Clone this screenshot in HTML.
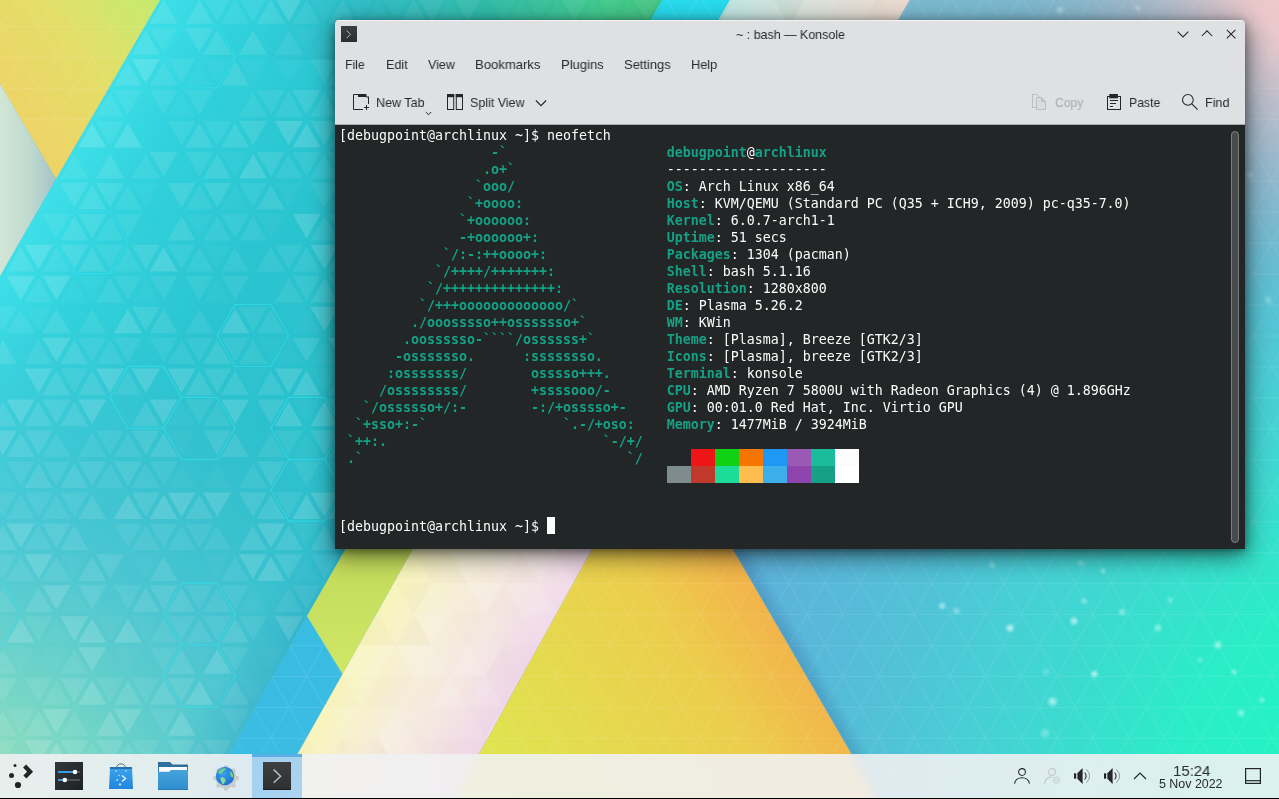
<!DOCTYPE html>
<html lang="en"><head><meta charset="utf-8"><title>~ : bash — Konsole</title>
<style>
html,body{margin:0;padding:0;}
body{width:1279px;height:799px;overflow:hidden;position:relative;background:#3cc;font-family:"Liberation Sans",sans-serif;font-size:13.33px;color:#232629;}
.wall{position:absolute;left:0;top:0;}
.abs{position:absolute;}
.win{position:absolute;left:335px;top:20px;width:910px;height:529px;background:#dee0e2;border-radius:4px 4px 0 0;box-shadow:0 6px 24px 1px rgba(0,0,0,0.55),0 2px 9px 0 rgba(0,0,0,0.35);overflow:hidden;}
.win .hl{position:absolute;left:0;top:0;width:100%;height:1px;background:rgba(255,255,255,0.65);}
.term{position:absolute;left:0;top:105px;width:910px;height:424px;background:#232627;box-shadow:0 -1px 0 #a9abad;}
.term pre{position:absolute;left:4px;top:2px;will-change:transform;margin:0;font-family:"DejaVu Sans Mono","Liberation Mono",monospace;font-size:13.29px;line-height:17px;color:#fcfcfc;white-space:pre;}
.term pre b.c{color:#16a085;font-weight:bold;}
.term i{position:absolute;width:24px;height:17px;display:block;}
.cursor{position:absolute;left:212px;top:392px;width:8px;height:17px;background:#fcfcfc;}
.sb{position:absolute;left:896px;top:6px;width:6px;height:410px;border:1px solid #7b7e7f;border-radius:4px;background:#484b4c;}
.lbl{position:absolute;white-space:pre;font-size:13.33px;line-height:16px;height:16px;transform-origin:0 0;color:#272b2f;will-change:transform;}
.dis{color:#a9acae;}
.panel{position:absolute;left:0;top:754px;width:1279px;height:44px;background:rgba(240,241,242,0.895);-webkit-backdrop-filter:blur(5px);backdrop-filter:blur(5px);}
.blackline{position:absolute;left:0;top:798px;width:1279px;height:1px;background:#000;}
.task{position:absolute;left:252px;top:754px;width:50px;height:44px;background:rgba(150,204,240,0.8);}
.task::before{content:"";position:absolute;left:0;top:0;width:100%;height:3px;background:#5aaee6;}
svg{display:block;overflow:visible;}
.clock{position:absolute;white-space:pre;color:#272b2f;transform-origin:0 0;will-change:transform;}

</style></head>
<body>

<svg class="wall" width="1279" height="799" viewBox="0 0 1279 799">
<defs>
  <radialGradient id="gMint" gradientUnits="userSpaceOnUse" cx="1380" cy="800" r="700">
    <stop offset="0" stop-color="#1cf8c2" stop-opacity="1"/><stop offset="0.3" stop-color="#28f0c6" stop-opacity="0.95"/><stop offset="0.6" stop-color="#40d8d4" stop-opacity="0.75"/><stop offset="1" stop-color="#54bcd8" stop-opacity="0"/>
  </radialGradient>
  <radialGradient id="gPink" gradientUnits="userSpaceOnUse" cx="1350" cy="-50" r="370">
    <stop offset="0" stop-color="#f8cccc" stop-opacity="1"/><stop offset="0.3" stop-color="#f0c8ca" stop-opacity="0.95"/><stop offset="0.6" stop-color="#b8b8c8" stop-opacity="0.6"/><stop offset="1" stop-color="#80b0c8" stop-opacity="0"/>
  </radialGradient>
  <linearGradient id="gSteel" gradientUnits="userSpaceOnUse" x1="0" y1="0" x2="0" y2="480">
    <stop offset="0" stop-color="#7cbad0" stop-opacity="1"/><stop offset="0.5" stop-color="#78b8ce" stop-opacity="0.8"/><stop offset="1" stop-color="#6ab8d8" stop-opacity="0"/>
  </linearGradient>
  <radialGradient id="gDot"><stop offset="0" stop-color="#fff" stop-opacity="1"/><stop offset="0.35" stop-color="#eaffff" stop-opacity="0.7"/><stop offset="1" stop-color="#dff" stop-opacity="0"/></radialGradient>
  <linearGradient id="gTeal" gradientUnits="userSpaceOnUse" x1="160" y1="0" x2="419.8" y2="150">
    <stop offset="0" stop-color="#3ddfe8"/><stop offset="0.25" stop-color="#31d2dd"/><stop offset="0.65" stop-color="#2ac5d1"/><stop offset="1" stop-color="#29c1cd"/>
  </linearGradient>
  <radialGradient id="gTealBL" gradientUnits="userSpaceOnUse" cx="-30" cy="820" r="520">
    <stop offset="0" stop-color="#a8e2b4" stop-opacity="1"/><stop offset="0.25" stop-color="#84dac4" stop-opacity="0.85"/><stop offset="0.55" stop-color="#60c8d4" stop-opacity="0.6"/><stop offset="1" stop-color="#50b8d0" stop-opacity="0"/>
  </radialGradient>
  <linearGradient id="gTealTop" gradientUnits="userSpaceOnUse" x1="260" y1="0" x2="660" y2="0">
    <stop offset="0" stop-color="#2cb6c6" stop-opacity="0"/><stop offset="0.25" stop-color="#2eb8c0" stop-opacity="0.7"/><stop offset="0.6" stop-color="#32bea4" stop-opacity="0.95"/><stop offset="1" stop-color="#48d27e" stop-opacity="1"/>
  </linearGradient>
  <linearGradient id="gYel" gradientUnits="userSpaceOnUse" x1="0" y1="120" x2="150" y2="0">
    <stop offset="0" stop-color="#efd266"/><stop offset="0.55" stop-color="#e4de68"/><stop offset="1" stop-color="#c6ea6e"/>
  </linearGradient>
  <linearGradient id="gPale" gradientUnits="userSpaceOnUse" x1="0" y1="0" x2="58" y2="0">
    <stop offset="0" stop-color="#d2e6d6"/><stop offset="0.5" stop-color="#c0dad0"/><stop offset="1" stop-color="#a2c2c4"/>
  </linearGradient>
  <linearGradient id="gStripe" gradientUnits="userSpaceOnUse" x1="0" y1="0" x2="0" y2="799">
    <stop offset="0" stop-color="#28dcee"/><stop offset="0.7" stop-color="#38bce0"/><stop offset="1" stop-color="#3cbce4"/>
  </linearGradient>
  <linearGradient id="gLime" gradientUnits="userSpaceOnUse" x1="0" y1="548" x2="0" y2="680">
    <stop offset="0" stop-color="#c2da5a"/><stop offset="1" stop-color="#d0e866"/>
  </linearGradient>
  <linearGradient id="gCream" gradientUnits="userSpaceOnUse" x1="413.5" y1="548" x2="548.6" y2="626">
    <stop offset="0" stop-color="#f8f5ba"/><stop offset="0.35" stop-color="#f6efd6"/><stop offset="0.7" stop-color="#f4e6e2"/><stop offset="1" stop-color="#f0d8ea"/>
  </linearGradient>
  <linearGradient id="gCreamTop" gradientUnits="userSpaceOnUse" x1="720" y1="0" x2="910" y2="0">
    <stop offset="0" stop-color="#b4e4e0"/><stop offset="0.5" stop-color="#d8ded6"/><stop offset="1" stop-color="#eedcd0"/>
  </linearGradient>
  <linearGradient id="gOr" gradientUnits="userSpaceOnUse" x1="470" y1="760" x2="760" y2="560">
    <stop offset="0" stop-color="#dee650"/><stop offset="0.68" stop-color="#eccd4c"/><stop offset="1" stop-color="#f4ae4a"/>
  </linearGradient>
  <linearGradient id="shA" gradientUnits="userSpaceOnUse" x1="662" y1="0" x2="623" y2="-22.5">
    <stop offset="0" stop-color="#0850a0" stop-opacity="0.10"/><stop offset="1" stop-color="#0850a0" stop-opacity="0"/>
  </linearGradient>
  <linearGradient id="shB" gradientUnits="userSpaceOnUse" x1="732.5" y1="549" x2="747.2" y2="540.5">
    <stop offset="0" stop-color="#102060" stop-opacity="0.17"/><stop offset="1" stop-color="#102060" stop-opacity="0"/>
  </linearGradient>
  <pattern id="wire" patternUnits="userSpaceOnUse" width="35.74" height="61.9" patternTransform="translate(181.5 26.0)">
    <path d="M0 0.5 H35.74 M0 31.45 H35.74 M0 0 L35.74 61.9 M35.74 0 L0 61.9" fill="none" stroke="#fff" stroke-width="1"/>
  </pattern>
  <clipPath id="cTeal"><polygon points="160.0,0.0 662.0,0.0 307.0,616.0 203.5,799.0 0.0,799.0 0.0,276.0 56.0,179.0"/></clipPath>
  <clipPath id="cCream"><polygon points="730.0,0.0 909.5,0.0 592.6,548.0 454.1,799.0 272.3,799.0 413.5,548.0"/></clipPath>
  <clipPath id="cRight"><polygon points="909.5,0.0 1279.0,0.0 1279.0,799.0 877.4,799.0 661.0,425.5"/></clipPath>
</defs>
<rect width="1279" height="799" fill="#5eb2da"/>
<rect x="880" width="399" height="480" fill="url(#gSteel)"/>
<rect width="1279" height="799" fill="url(#gMint)"/>
<rect width="1279" height="799" fill="url(#gPink)"/>
<g clip-path="url(#cRight)">
  <rect width="1279" height="799" fill="url(#wire)" opacity="0.09"/>
  <circle cx="942" cy="606" r="5.0" fill="url(#gDot)" opacity="0.50"/><circle cx="956.6" cy="611" r="5.0" fill="url(#gDot)" opacity="0.36"/><circle cx="1010" cy="628" r="5.5" fill="url(#gDot)" opacity="0.68"/><circle cx="1074" cy="621" r="5.5" fill="url(#gDot)" opacity="0.63"/><circle cx="1084" cy="601" r="4.6" fill="url(#gDot)" opacity="0.36"/><circle cx="1122" cy="612" r="5.0" fill="url(#gDot)" opacity="0.41"/><circle cx="1094.5" cy="674" r="5.0" fill="url(#gDot)" opacity="0.63"/><circle cx="1052.6" cy="701.6" r="6.3" fill="url(#gDot)" opacity="0.63"/><circle cx="1045" cy="733" r="6.3" fill="url(#gDot)" opacity="0.36"/><circle cx="1046" cy="672" r="5.2" fill="url(#gDot)" opacity="0.23"/><circle cx="992" cy="565" r="5.0" fill="url(#gDot)" opacity="0.27"/><circle cx="1081" cy="563" r="5.0" fill="url(#gDot)" opacity="0.32"/><circle cx="1103" cy="571" r="4.2" fill="url(#gDot)" opacity="0.36"/><circle cx="1218" cy="645" r="5.5" fill="url(#gDot)" opacity="0.54"/><circle cx="1234" cy="672" r="4.2" fill="url(#gDot)" opacity="0.41"/><circle cx="1241" cy="713" r="5.5" fill="url(#gDot)" opacity="0.45"/><circle cx="1262" cy="700" r="4.2" fill="url(#gDot)" opacity="0.36"/><circle cx="1200" cy="660" r="4.2" fill="url(#gDot)" opacity="0.27"/><circle cx="1158" cy="628" r="5.5" fill="url(#gDot)" opacity="0.45"/><circle cx="1170" cy="600" r="4.2" fill="url(#gDot)" opacity="0.32"/><circle cx="1225" cy="203" r="6.3" fill="url(#gDot)" opacity="0.32"/><circle cx="1250" cy="175" r="5.2" fill="url(#gDot)" opacity="0.27"/><circle cx="1268" cy="300" r="5.2" fill="url(#gDot)" opacity="0.27"/><circle cx="1060" cy="10" r="5.2" fill="url(#gDot)" opacity="0.36"/><circle cx="1138" cy="8" r="4.2" fill="url(#gDot)" opacity="0.32"/>
  <polygon points="661.0,425.5 877.4,799.0 912.0,779.0 695.6,405.5" fill="url(#shB)" transform=""/>
</g>
<polygon points="160.0,0.0 662.0,0.0 307.0,616.0 203.5,799.0 0.0,799.0 0.0,276.0 56.0,179.0" fill="url(#gTeal)"/>
<polygon points="160.0,0.0 662.0,0.0 307.0,616.0 203.5,799.0 0.0,799.0 0.0,276.0 56.0,179.0" fill="url(#gTealBL)"/>
<polygon points="260.0,0.0 662.0,0.0 627.4,60.0 260.0,60.0" fill="url(#gTealTop)"/>
<g clip-path="url(#cTeal)">
  <path d="M-11.3 -2.8 L16.9 -2.8 L2.8 21.7ZM60.2 -2.8 L88.4 -2.8 L74.3 21.7ZM92.1 -0.6 L106.3 23.8 L78.0 23.8ZM310.3 -2.8 L338.6 -2.8 L324.5 21.7ZM346.1 -2.8 L374.3 -2.8 L360.2 21.7ZM378.1 -0.6 L392.2 23.8 L364.0 23.8ZM381.8 -2.8 L410.1 -2.8 L395.9 21.7ZM449.6 -0.6 L463.7 23.8 L435.4 23.8ZM489.0 -2.8 L517.3 -2.8 L503.2 21.7ZM521.0 -0.6 L535.1 23.8 L506.9 23.8ZM524.8 -2.8 L553.0 -2.8 L538.9 21.7ZM556.8 -0.6 L570.9 23.8 L542.7 23.8ZM592.5 -0.6 L606.6 23.8 L578.4 23.8ZM596.3 -2.8 L624.5 -2.8 L610.4 21.7ZM628.2 -0.6 L642.4 23.8 L614.1 23.8ZM74.3 30.3 L88.4 54.8 L60.2 54.8ZM292.5 28.2 L320.7 28.2 L306.6 52.6ZM324.5 30.3 L338.6 54.8 L310.3 54.8ZM328.2 28.2 L356.4 28.2 L342.3 52.6ZM199.4 61.3 L213.5 85.7 L185.3 85.7ZM203.1 59.1 L231.4 59.1 L217.2 83.6ZM238.9 59.1 L267.1 59.1 L253.0 83.6ZM274.6 59.1 L302.8 59.1 L288.7 83.6ZM181.5 92.2 L195.6 116.7 L167.4 116.7ZM24.4 121.0 L52.7 121.0 L38.5 145.5ZM42.3 152.0 L70.5 152.0 L56.4 176.4ZM221.0 152.0 L249.2 152.0 L235.1 176.4ZM24.4 182.9 L52.7 182.9 L38.5 207.4ZM131.6 182.9 L159.9 182.9 L145.8 207.4ZM235.1 185.1 L249.2 209.5 L221.0 209.5ZM274.6 182.9 L302.8 182.9 L288.7 207.4ZM342.3 185.1 L356.4 209.5 L328.2 209.5ZM2.8 216.0 L16.9 240.5 L-11.3 240.5ZM185.3 213.9 L213.5 213.9 L199.4 238.3ZM256.7 213.9 L285.0 213.9 L270.9 238.3ZM-11.3 244.8 L16.9 244.8 L2.8 269.3ZM203.1 244.8 L231.4 244.8 L217.2 269.3ZM74.3 277.9 L88.4 302.4 L60.2 302.4ZM78.0 275.8 L106.3 275.8 L92.1 300.2ZM145.8 277.9 L159.9 302.4 L131.6 302.4ZM217.2 277.9 L231.4 302.4 L203.1 302.4ZM24.4 306.7 L52.7 306.7 L38.5 331.2ZM306.6 308.9 L320.7 333.3 L292.5 333.3ZM-29.2 337.7 L-1.0 337.7 L-15.1 362.1ZM256.7 337.7 L285.0 337.7 L270.9 362.1ZM288.7 339.8 L302.8 364.3 L274.6 364.3ZM324.5 339.8 L338.6 364.3 L310.3 364.3ZM238.9 368.6 L267.1 368.6 L253.0 393.1ZM310.3 368.6 L338.6 368.6 L324.5 393.1ZM-29.2 399.6 L-1.0 399.6 L-15.1 424.0ZM181.5 401.7 L195.6 426.2 L167.4 426.2ZM292.5 399.6 L320.7 399.6 L306.6 424.0ZM167.4 430.5 L195.6 430.5 L181.5 455.0ZM306.6 432.7 L320.7 457.1 L292.5 457.1ZM2.8 463.6 L16.9 488.1 L-11.3 488.1ZM181.5 463.6 L195.6 488.1 L167.4 488.1ZM217.2 463.6 L231.4 488.1 L203.1 488.1ZM328.2 461.5 L356.4 461.5 L342.3 485.9ZM-15.1 494.6 L-1.0 519.0 L-29.2 519.0ZM292.5 523.4 L320.7 523.4 L306.6 547.8ZM60.2 554.3 L88.4 554.3 L74.3 578.8ZM131.6 554.3 L159.9 554.3 L145.8 578.8ZM203.1 554.3 L231.4 554.3 L217.2 578.8ZM306.6 556.5 L320.7 580.9 L292.5 580.9ZM-29.2 585.3 L-1.0 585.3 L-15.1 609.7ZM74.3 587.4 L88.4 611.9 L60.2 611.9ZM253.0 587.4 L267.1 611.9 L238.9 611.9ZM-11.3 616.2 L16.9 616.2 L2.8 640.7ZM56.4 618.4 L70.5 642.8 L42.3 642.8ZM95.9 616.2 L124.1 616.2 L110.0 640.7ZM131.6 616.2 L159.9 616.2 L145.8 640.7ZM6.6 647.2 L34.8 647.2 L20.7 671.6ZM42.3 647.2 L70.5 647.2 L56.4 671.6ZM113.8 647.2 L142.0 647.2 L127.9 671.6ZM185.3 647.2 L213.5 647.2 L199.4 671.6ZM256.7 647.2 L285.0 647.2 L270.9 671.6ZM203.1 678.1 L231.4 678.1 L217.2 702.6ZM238.9 678.1 L267.1 678.1 L253.0 702.6ZM163.6 742.2 L177.7 766.6 L149.5 766.6ZM6.6 771.0 L34.8 771.0 L20.7 795.4Z" fill="#fff" fill-opacity="0.03"/><path d="M-15.1 -0.6 L-1.0 23.8 L-29.2 23.8ZM131.6 -2.8 L159.9 -2.8 L145.8 21.7ZM203.1 -2.8 L231.4 -2.8 L217.2 21.7ZM235.1 -0.6 L249.2 23.8 L221.0 23.8ZM238.9 -2.8 L267.1 -2.8 L253.0 21.7ZM306.6 -0.6 L320.7 23.8 L292.5 23.8ZM342.3 -0.6 L356.4 23.8 L328.2 23.8ZM413.8 -0.6 L427.9 23.8 L399.7 23.8ZM417.6 -2.8 L445.8 -2.8 L431.7 21.7ZM453.3 -2.8 L481.5 -2.8 L467.4 21.7ZM560.5 -2.8 L588.8 -2.8 L574.6 21.7ZM632.0 -2.8 L660.2 -2.8 L646.1 21.7ZM2.8 30.3 L16.9 54.8 L-11.3 54.8ZM78.0 28.2 L106.3 28.2 L92.1 52.6ZM110.0 30.3 L124.1 54.8 L95.9 54.8ZM149.5 28.2 L177.7 28.2 L163.6 52.6ZM288.7 30.3 L302.8 54.8 L274.6 54.8ZM-15.1 61.3 L-1.0 85.7 L-29.2 85.7ZM-11.3 59.1 L16.9 59.1 L2.8 83.6ZM163.6 61.3 L177.7 85.7 L149.5 85.7ZM167.4 59.1 L195.6 59.1 L181.5 83.6ZM310.3 59.1 L338.6 59.1 L324.5 83.6ZM342.3 61.3 L356.4 85.7 L328.2 85.7ZM42.3 90.1 L70.5 90.1 L56.4 114.5ZM74.3 92.2 L88.4 116.7 L60.2 116.7ZM110.0 92.2 L124.1 116.7 L95.9 116.7ZM113.8 90.1 L142.0 90.1 L127.9 114.5ZM149.5 90.1 L177.7 90.1 L163.6 114.5ZM185.3 90.1 L213.5 90.1 L199.4 114.5ZM253.0 92.2 L267.1 116.7 L238.9 116.7ZM256.7 90.1 L285.0 90.1 L270.9 114.5ZM288.7 92.2 L302.8 116.7 L274.6 116.7ZM324.5 92.2 L338.6 116.7 L310.3 116.7ZM328.2 90.1 L356.4 90.1 L342.3 114.5ZM-11.3 121.0 L16.9 121.0 L2.8 145.5ZM95.9 121.0 L124.1 121.0 L110.0 145.5ZM167.4 121.0 L195.6 121.0 L181.5 145.5ZM203.1 121.0 L231.4 121.0 L217.2 145.5ZM342.3 123.2 L356.4 147.6 L328.2 147.6ZM-29.2 152.0 L-1.0 152.0 L-15.1 176.4ZM74.3 154.1 L88.4 178.6 L60.2 178.6ZM145.8 154.1 L159.9 178.6 L131.6 178.6ZM185.3 152.0 L213.5 152.0 L199.4 176.4ZM288.7 154.1 L302.8 178.6 L274.6 178.6ZM292.5 152.0 L320.7 152.0 L306.6 176.4ZM324.5 154.1 L338.6 178.6 L310.3 178.6ZM328.2 152.0 L356.4 152.0 L342.3 176.4ZM-15.1 185.1 L-1.0 209.5 L-29.2 209.5ZM-11.3 182.9 L16.9 182.9 L2.8 207.4ZM127.9 185.1 L142.0 209.5 L113.8 209.5ZM199.4 185.1 L213.5 209.5 L185.3 209.5ZM238.9 182.9 L267.1 182.9 L253.0 207.4ZM310.3 182.9 L338.6 182.9 L324.5 207.4ZM42.3 213.9 L70.5 213.9 L56.4 238.3ZM110.0 216.0 L124.1 240.5 L95.9 240.5ZM113.8 213.9 L142.0 213.9 L127.9 238.3ZM217.2 216.0 L231.4 240.5 L203.1 240.5ZM221.0 213.9 L249.2 213.9 L235.1 238.3ZM253.0 216.0 L267.1 240.5 L238.9 240.5ZM324.5 216.0 L338.6 240.5 L310.3 240.5ZM328.2 213.9 L356.4 213.9 L342.3 238.3ZM56.4 247.0 L70.5 271.4 L42.3 271.4ZM95.9 244.8 L124.1 244.8 L110.0 269.3ZM127.9 247.0 L142.0 271.4 L113.8 271.4ZM167.4 244.8 L195.6 244.8 L181.5 269.3ZM199.4 247.0 L213.5 271.4 L185.3 271.4ZM235.1 247.0 L249.2 271.4 L221.0 271.4ZM270.9 247.0 L285.0 271.4 L256.7 271.4ZM274.6 244.8 L302.8 244.8 L288.7 269.3ZM306.6 247.0 L320.7 271.4 L292.5 271.4ZM342.3 247.0 L356.4 271.4 L328.2 271.4ZM38.5 277.9 L52.7 302.4 L24.4 302.4ZM110.0 277.9 L124.1 302.4 L95.9 302.4ZM113.8 275.8 L142.0 275.8 L127.9 300.2ZM149.5 275.8 L177.7 275.8 L163.6 300.2ZM185.3 275.8 L213.5 275.8 L199.4 300.2ZM221.0 275.8 L249.2 275.8 L235.1 300.2ZM288.7 277.9 L302.8 302.4 L274.6 302.4ZM292.5 275.8 L320.7 275.8 L306.6 300.2ZM328.2 275.8 L356.4 275.8 L342.3 300.2ZM-11.3 306.7 L16.9 306.7 L2.8 331.2ZM20.7 308.9 L34.8 333.3 L6.6 333.3ZM92.1 308.9 L106.3 333.3 L78.0 333.3ZM199.4 308.9 L213.5 333.3 L185.3 333.3ZM238.9 306.7 L267.1 306.7 L253.0 331.2ZM270.9 308.9 L285.0 333.3 L256.7 333.3ZM38.5 339.8 L52.7 364.3 L24.4 364.3ZM78.0 337.7 L106.3 337.7 L92.1 362.1ZM110.0 339.8 L124.1 364.3 L95.9 364.3ZM113.8 337.7 L142.0 337.7 L127.9 362.1ZM149.5 337.7 L177.7 337.7 L163.6 362.1ZM181.5 339.8 L195.6 364.3 L167.4 364.3ZM185.3 337.7 L213.5 337.7 L199.4 362.1ZM221.0 337.7 L249.2 337.7 L235.1 362.1ZM253.0 339.8 L267.1 364.3 L238.9 364.3ZM60.2 368.6 L88.4 368.6 L74.3 393.1ZM127.9 370.8 L142.0 395.2 L113.8 395.2ZM342.3 370.8 L356.4 395.2 L328.2 395.2ZM185.3 399.6 L213.5 399.6 L199.4 424.0ZM217.2 401.7 L231.4 426.2 L203.1 426.2ZM-15.1 432.7 L-1.0 457.1 L-29.2 457.1ZM56.4 432.7 L70.5 457.1 L42.3 457.1ZM92.1 432.7 L106.3 457.1 L78.0 457.1ZM95.9 430.5 L124.1 430.5 L110.0 455.0ZM127.9 432.7 L142.0 457.1 L113.8 457.1ZM270.9 432.7 L285.0 457.1 L256.7 457.1ZM274.6 430.5 L302.8 430.5 L288.7 455.0ZM342.3 432.7 L356.4 457.1 L328.2 457.1ZM6.6 461.5 L34.8 461.5 L20.7 485.9ZM42.3 461.5 L70.5 461.5 L56.4 485.9ZM110.0 463.6 L124.1 488.1 L95.9 488.1ZM145.8 463.6 L159.9 488.1 L131.6 488.1ZM149.5 461.5 L177.7 461.5 L163.6 485.9ZM253.0 463.6 L267.1 488.1 L238.9 488.1ZM292.5 461.5 L320.7 461.5 L306.6 485.9ZM-11.3 492.4 L16.9 492.4 L2.8 516.9ZM20.7 494.6 L34.8 519.0 L6.6 519.0ZM24.4 492.4 L52.7 492.4 L38.5 516.9ZM56.4 494.6 L70.5 519.0 L42.3 519.0ZM60.2 492.4 L88.4 492.4 L74.3 516.9ZM274.6 492.4 L302.8 492.4 L288.7 516.9ZM38.5 525.5 L52.7 550.0 L24.4 550.0ZM113.8 523.4 L142.0 523.4 L127.9 547.8ZM145.8 525.5 L159.9 550.0 L131.6 550.0ZM149.5 523.4 L177.7 523.4 L163.6 547.8ZM181.5 525.5 L195.6 550.0 L167.4 550.0ZM185.3 523.4 L213.5 523.4 L199.4 547.8ZM217.2 525.5 L231.4 550.0 L203.1 550.0ZM-11.3 554.3 L16.9 554.3 L2.8 578.8ZM20.7 556.5 L34.8 580.9 L6.6 580.9ZM56.4 556.5 L70.5 580.9 L42.3 580.9ZM235.1 556.5 L249.2 580.9 L221.0 580.9ZM310.3 554.3 L338.6 554.3 L324.5 578.8ZM2.8 587.4 L16.9 611.9 L-11.3 611.9ZM113.8 585.3 L142.0 585.3 L127.9 609.7ZM185.3 585.3 L213.5 585.3 L199.4 609.7ZM217.2 587.4 L231.4 611.9 L203.1 611.9ZM221.0 585.3 L249.2 585.3 L235.1 609.7ZM288.7 587.4 L302.8 611.9 L274.6 611.9ZM292.5 585.3 L320.7 585.3 L306.6 609.7ZM24.4 616.2 L52.7 616.2 L38.5 640.7ZM163.6 618.4 L177.7 642.8 L149.5 642.8ZM167.4 616.2 L195.6 616.2 L181.5 640.7ZM199.4 618.4 L213.5 642.8 L185.3 642.8ZM203.1 616.2 L231.4 616.2 L217.2 640.7ZM238.9 616.2 L267.1 616.2 L253.0 640.7ZM74.3 649.3 L88.4 673.8 L60.2 673.8ZM149.5 647.2 L177.7 647.2 L163.6 671.6ZM221.0 647.2 L249.2 647.2 L235.1 671.6ZM-15.1 680.3 L-1.0 704.7 L-29.2 704.7ZM24.4 678.1 L52.7 678.1 L38.5 702.6ZM56.4 680.3 L70.5 704.7 L42.3 704.7ZM95.9 678.1 L124.1 678.1 L110.0 702.6ZM131.6 678.1 L159.9 678.1 L145.8 702.6ZM6.6 709.1 L34.8 709.1 L20.7 733.5ZM74.3 711.2 L88.4 735.7 L60.2 735.7ZM149.5 709.1 L177.7 709.1 L163.6 733.5ZM221.0 709.1 L249.2 709.1 L235.1 733.5ZM-11.3 740.0 L16.9 740.0 L2.8 764.5ZM92.1 742.2 L106.3 766.6 L78.0 766.6ZM127.9 742.2 L142.0 766.6 L113.8 766.6ZM131.6 740.0 L159.9 740.0 L145.8 764.5ZM199.4 742.2 L213.5 766.6 L185.3 766.6ZM78.0 771.0 L106.3 771.0 L92.1 795.4ZM181.5 773.1 L195.6 797.6 L167.4 797.6Z" fill="#fff" fill-opacity="0.07"/><path d="M20.7 -0.6 L34.8 23.8 L6.6 23.8ZM24.4 -2.8 L52.7 -2.8 L38.5 21.7ZM56.4 -0.6 L70.5 23.8 L42.3 23.8ZM95.9 -2.8 L124.1 -2.8 L110.0 21.7ZM127.9 -0.6 L142.0 23.8 L113.8 23.8ZM163.6 -0.6 L177.7 23.8 L149.5 23.8ZM199.4 -0.6 L213.5 23.8 L185.3 23.8ZM270.9 -0.6 L285.0 23.8 L256.7 23.8ZM38.5 30.3 L52.7 54.8 L24.4 54.8ZM42.3 28.2 L70.5 28.2 L56.4 52.6ZM113.8 28.2 L142.0 28.2 L127.9 52.6ZM145.8 30.3 L159.9 54.8 L131.6 54.8ZM185.3 28.2 L213.5 28.2 L199.4 52.6ZM217.2 30.3 L231.4 54.8 L203.1 54.8ZM253.0 30.3 L267.1 54.8 L238.9 54.8ZM24.4 59.1 L52.7 59.1 L38.5 83.6ZM95.9 59.1 L124.1 59.1 L110.0 83.6ZM127.9 61.3 L142.0 85.7 L113.8 85.7ZM235.1 61.3 L249.2 85.7 L221.0 85.7ZM-29.2 90.1 L-1.0 90.1 L-15.1 114.5ZM2.8 92.2 L16.9 116.7 L-11.3 116.7ZM38.5 92.2 L52.7 116.7 L24.4 116.7ZM78.0 90.1 L106.3 90.1 L92.1 114.5ZM292.5 90.1 L320.7 90.1 L306.6 114.5ZM-15.1 123.2 L-1.0 147.6 L-29.2 147.6ZM20.7 123.2 L34.8 147.6 L6.6 147.6ZM60.2 121.0 L88.4 121.0 L74.3 145.5ZM199.4 123.2 L213.5 147.6 L185.3 147.6ZM235.1 123.2 L249.2 147.6 L221.0 147.6ZM238.9 121.0 L267.1 121.0 L253.0 145.5ZM310.3 121.0 L338.6 121.0 L324.5 145.5ZM38.5 154.1 L52.7 178.6 L24.4 178.6ZM110.0 154.1 L124.1 178.6 L95.9 178.6ZM149.5 152.0 L177.7 152.0 L163.6 176.4ZM217.2 154.1 L231.4 178.6 L203.1 178.6ZM256.7 152.0 L285.0 152.0 L270.9 176.4ZM20.7 185.1 L34.8 209.5 L6.6 209.5ZM60.2 182.9 L88.4 182.9 L74.3 207.4ZM92.1 185.1 L106.3 209.5 L78.0 209.5ZM95.9 182.9 L124.1 182.9 L110.0 207.4ZM167.4 182.9 L195.6 182.9 L181.5 207.4ZM203.1 182.9 L231.4 182.9 L217.2 207.4ZM270.9 185.1 L285.0 209.5 L256.7 209.5ZM-29.2 213.9 L-1.0 213.9 L-15.1 238.3ZM6.6 213.9 L34.8 213.9 L20.7 238.3ZM74.3 216.0 L88.4 240.5 L60.2 240.5ZM78.0 213.9 L106.3 213.9 L92.1 238.3ZM181.5 216.0 L195.6 240.5 L167.4 240.5ZM20.7 247.0 L34.8 271.4 L6.6 271.4ZM60.2 244.8 L88.4 244.8 L74.3 269.3ZM92.1 247.0 L106.3 271.4 L78.0 271.4ZM131.6 244.8 L159.9 244.8 L145.8 269.3ZM-29.2 275.8 L-1.0 275.8 L-15.1 300.2ZM324.5 277.9 L338.6 302.4 L310.3 302.4ZM56.4 308.9 L70.5 333.3 L42.3 333.3ZM131.6 306.7 L159.9 306.7 L145.8 331.2ZM163.6 308.9 L177.7 333.3 L149.5 333.3ZM2.8 339.8 L16.9 364.3 L-11.3 364.3ZM74.3 339.8 L88.4 364.3 L60.2 364.3ZM217.2 339.8 L231.4 364.3 L203.1 364.3ZM292.5 337.7 L320.7 337.7 L306.6 362.1ZM-15.1 370.8 L-1.0 395.2 L-29.2 395.2ZM56.4 370.8 L70.5 395.2 L42.3 395.2ZM92.1 370.8 L106.3 395.2 L78.0 395.2ZM199.4 370.8 L213.5 395.2 L185.3 395.2ZM203.1 368.6 L231.4 368.6 L217.2 393.1ZM235.1 370.8 L249.2 395.2 L221.0 395.2ZM270.9 370.8 L285.0 395.2 L256.7 395.2ZM2.8 401.7 L16.9 426.2 L-11.3 426.2ZM38.5 401.7 L52.7 426.2 L24.4 426.2ZM42.3 399.6 L70.5 399.6 L56.4 424.0ZM74.3 401.7 L88.4 426.2 L60.2 426.2ZM145.8 401.7 L159.9 426.2 L131.6 426.2ZM256.7 399.6 L285.0 399.6 L270.9 424.0ZM328.2 399.6 L356.4 399.6 L342.3 424.0ZM20.7 432.7 L34.8 457.1 L6.6 457.1ZM24.4 430.5 L52.7 430.5 L38.5 455.0ZM131.6 430.5 L159.9 430.5 L145.8 455.0ZM163.6 432.7 L177.7 457.1 L149.5 457.1ZM203.1 430.5 L231.4 430.5 L217.2 455.0ZM235.1 432.7 L249.2 457.1 L221.0 457.1ZM310.3 430.5 L338.6 430.5 L324.5 455.0ZM38.5 463.6 L52.7 488.1 L24.4 488.1ZM74.3 463.6 L88.4 488.1 L60.2 488.1ZM78.0 461.5 L106.3 461.5 L92.1 485.9ZM113.8 461.5 L142.0 461.5 L127.9 485.9ZM256.7 461.5 L285.0 461.5 L270.9 485.9ZM92.1 494.6 L106.3 519.0 L78.0 519.0ZM131.6 492.4 L159.9 492.4 L145.8 516.9ZM199.4 494.6 L213.5 519.0 L185.3 519.0ZM238.9 492.4 L267.1 492.4 L253.0 516.9ZM270.9 494.6 L285.0 519.0 L256.7 519.0ZM-29.2 523.4 L-1.0 523.4 L-15.1 547.8ZM2.8 525.5 L16.9 550.0 L-11.3 550.0ZM42.3 523.4 L70.5 523.4 L56.4 547.8ZM74.3 525.5 L88.4 550.0 L60.2 550.0ZM253.0 525.5 L267.1 550.0 L238.9 550.0ZM288.7 525.5 L302.8 550.0 L274.6 550.0ZM324.5 525.5 L338.6 550.0 L310.3 550.0ZM-15.1 556.5 L-1.0 580.9 L-29.2 580.9ZM92.1 556.5 L106.3 580.9 L78.0 580.9ZM95.9 554.3 L124.1 554.3 L110.0 578.8ZM163.6 556.5 L177.7 580.9 L149.5 580.9ZM274.6 554.3 L302.8 554.3 L288.7 578.8ZM38.5 587.4 L52.7 611.9 L24.4 611.9ZM78.0 585.3 L106.3 585.3 L92.1 609.7ZM145.8 587.4 L159.9 611.9 L131.6 611.9ZM149.5 585.3 L177.7 585.3 L163.6 609.7ZM181.5 587.4 L195.6 611.9 L167.4 611.9ZM235.1 618.4 L249.2 642.8 L221.0 642.8ZM-29.2 647.2 L-1.0 647.2 L-15.1 671.6ZM2.8 649.3 L16.9 673.8 L-11.3 673.8ZM181.5 649.3 L195.6 673.8 L167.4 673.8ZM-11.3 678.1 L16.9 678.1 L2.8 702.6ZM60.2 678.1 L88.4 678.1 L74.3 702.6ZM127.9 680.3 L142.0 704.7 L113.8 704.7ZM163.6 680.3 L177.7 704.7 L149.5 704.7ZM167.4 678.1 L195.6 678.1 L181.5 702.6ZM235.1 680.3 L249.2 704.7 L221.0 704.7ZM2.8 711.2 L16.9 735.7 L-11.3 735.7ZM38.5 711.2 L52.7 735.7 L24.4 735.7ZM60.2 740.0 L88.4 740.0 L74.3 764.5ZM95.9 740.0 L124.1 740.0 L110.0 764.5ZM167.4 740.0 L195.6 740.0 L181.5 764.5ZM203.1 740.0 L231.4 740.0 L217.2 764.5ZM38.5 773.1 L52.7 797.6 L24.4 797.6ZM110.0 773.1 L124.1 797.6 L95.9 797.6ZM145.8 773.1 L159.9 797.6 L131.6 797.6ZM185.3 771.0 L213.5 771.0 L199.4 795.4Z" fill="#fff" fill-opacity="0.1"/><path d="M274.6 -2.8 L302.8 -2.8 L288.7 21.7ZM-29.2 28.2 L-1.0 28.2 L-15.1 52.6ZM6.6 28.2 L34.8 28.2 L20.7 52.6ZM60.2 59.1 L88.4 59.1 L74.3 83.6ZM92.1 61.3 L106.3 85.7 L78.0 85.7ZM131.6 59.1 L159.9 59.1 L145.8 83.6ZM92.1 123.2 L106.3 147.6 L78.0 147.6ZM127.9 123.2 L142.0 147.6 L113.8 147.6ZM274.6 121.0 L302.8 121.0 L288.7 145.5ZM306.6 123.2 L320.7 147.6 L292.5 147.6ZM2.8 154.1 L16.9 178.6 L-11.3 178.6ZM6.6 152.0 L34.8 152.0 L20.7 176.4ZM253.0 154.1 L267.1 178.6 L238.9 178.6ZM292.5 213.9 L320.7 213.9 L306.6 238.3ZM24.4 244.8 L52.7 244.8 L38.5 269.3ZM163.6 247.0 L177.7 271.4 L149.5 271.4ZM310.3 244.8 L338.6 244.8 L324.5 269.3ZM6.6 275.8 L34.8 275.8 L20.7 300.2ZM42.3 275.8 L70.5 275.8 L56.4 300.2ZM-15.1 308.9 L-1.0 333.3 L-29.2 333.3ZM127.9 308.9 L142.0 333.3 L113.8 333.3ZM235.1 308.9 L249.2 333.3 L221.0 333.3ZM310.3 306.7 L338.6 306.7 L324.5 331.2ZM42.3 337.7 L70.5 337.7 L56.4 362.1ZM328.2 337.7 L356.4 337.7 L342.3 362.1ZM24.4 368.6 L52.7 368.6 L38.5 393.1ZM95.9 368.6 L124.1 368.6 L110.0 393.1ZM131.6 368.6 L159.9 368.6 L145.8 393.1ZM167.4 368.6 L195.6 368.6 L181.5 393.1ZM274.6 368.6 L302.8 368.6 L288.7 393.1ZM306.6 370.8 L320.7 395.2 L292.5 395.2ZM6.6 399.6 L34.8 399.6 L20.7 424.0ZM78.0 399.6 L106.3 399.6 L92.1 424.0ZM149.5 399.6 L177.7 399.6 L163.6 424.0ZM221.0 399.6 L249.2 399.6 L235.1 424.0ZM288.7 401.7 L302.8 426.2 L274.6 426.2ZM324.5 401.7 L338.6 426.2 L310.3 426.2ZM-11.3 430.5 L16.9 430.5 L2.8 455.0ZM-29.2 461.5 L-1.0 461.5 L-15.1 485.9ZM127.9 494.6 L142.0 519.0 L113.8 519.0ZM163.6 494.6 L177.7 519.0 L149.5 519.0ZM167.4 492.4 L195.6 492.4 L181.5 516.9ZM203.1 492.4 L231.4 492.4 L217.2 516.9ZM306.6 494.6 L320.7 519.0 L292.5 519.0ZM310.3 492.4 L338.6 492.4 L324.5 516.9ZM342.3 494.6 L356.4 519.0 L328.2 519.0ZM6.6 523.4 L34.8 523.4 L20.7 547.8ZM256.7 523.4 L285.0 523.4 L270.9 547.8ZM24.4 554.3 L52.7 554.3 L38.5 578.8ZM238.9 554.3 L267.1 554.3 L253.0 578.8ZM270.9 556.5 L285.0 580.9 L256.7 580.9ZM42.3 585.3 L70.5 585.3 L56.4 609.7ZM-15.1 618.4 L-1.0 642.8 L-29.2 642.8ZM20.7 618.4 L34.8 642.8 L6.6 642.8ZM60.2 616.2 L88.4 616.2 L74.3 640.7ZM92.1 618.4 L106.3 642.8 L78.0 642.8ZM127.9 618.4 L142.0 642.8 L113.8 642.8ZM274.6 616.2 L302.8 616.2 L288.7 640.7ZM78.0 647.2 L106.3 647.2 L92.1 671.6ZM217.2 649.3 L231.4 673.8 L203.1 673.8ZM92.1 680.3 L106.3 704.7 L78.0 704.7ZM199.4 680.3 L213.5 704.7 L185.3 704.7ZM-29.2 709.1 L-1.0 709.1 L-15.1 733.5ZM42.3 709.1 L70.5 709.1 L56.4 733.5ZM110.0 711.2 L124.1 735.7 L95.9 735.7ZM113.8 709.1 L142.0 709.1 L127.9 733.5ZM181.5 711.2 L195.6 735.7 L167.4 735.7ZM24.4 740.0 L52.7 740.0 L38.5 764.5ZM56.4 742.2 L70.5 766.6 L42.3 766.6ZM42.3 771.0 L70.5 771.0 L56.4 795.4ZM149.5 771.0 L177.7 771.0 L163.6 795.4Z" fill="#fff" fill-opacity="0.15"/>
  <path d="M20.7 614.0 L2.8 645.0 L-32.9 645.0 L-50.8 614.0 L-32.9 583.1 L2.8 583.1ZM235.1 614.0 L217.2 645.0 L181.5 645.0 L163.6 614.0 L181.5 583.1 L217.2 583.1ZM235.1 675.9 L217.2 706.9 L181.5 706.9 L163.6 675.9 L181.5 645.0 L217.2 645.0ZM342.3 490.2 L324.5 521.2 L288.7 521.2 L270.9 490.2 L288.7 459.3 L324.5 459.3ZM288.7 335.5 L270.9 366.5 L235.1 366.5 L217.2 335.5 L235.1 304.5 L270.9 304.5ZM181.5 397.4 L163.6 428.4 L127.9 428.4 L110.0 397.4 L127.9 366.4 L163.6 366.4ZM235.1 57.0 L217.2 87.9 L181.5 87.9 L163.6 57.0 L181.5 26.0 L217.2 26.0ZM127.9 242.7 L110.0 273.6 L74.3 273.6 L56.4 242.7 L74.3 211.7 L110.0 211.7ZM235.1 428.3 L217.2 459.3 L181.5 459.3 L163.6 428.3 L181.5 397.4 L217.2 397.4ZM342.3 428.3 L324.5 459.3 L288.7 459.3 L270.9 428.3 L288.7 397.4 L324.5 397.4Z" fill="none" stroke="#34e4f4" stroke-width="1.2" opacity="0.55"/>
  <polygon points="662.0,0.0 203.5,799.0 163.6,776.0 622.2,-23.0" fill="url(#shA)"/>
</g>
<polygon points="0.0,0.0 160.0,0.0 56.0,179.0 0.0,84.0" fill="url(#gYel)"/>
<polygon points="0.0,0.0 160.0,0.0 56.0,179.0 0.0,84.0" fill="url(#wire)" opacity="0.10"/>
<polygon points="0.0,84.0 56.0,179.0 0.0,276.0" fill="url(#gPale)"/>
<polygon points="662.0,0.0 730.0,0.0 413.5,548.0 272.3,799.0 203.5,799.0 307.0,616.0" fill="url(#gStripe)"/>
<polygon points="662.0,0.0 730.0,0.0 413.5,548.0 272.3,799.0 203.5,799.0 307.0,616.0" fill="url(#wire)" opacity="0.10"/>
<polygon points="431.5,400.0 499.0,400.0 413.5,548.0 342.6,674.0 307.0,616.0" fill="url(#gLime)"/>
<polygon points="730.0,0.0 909.5,0.0 592.6,548.0 454.1,799.0 272.3,799.0 413.5,548.0" fill="url(#gCream)"/>
<polygon points="730.0,0.0 909.0,0.0 874.8,60.0 695.3,60.0" fill="url(#gCreamTop)"/>
<g clip-path="url(#cCream)"><path d="M842.7 -4.9 L860.6 26.0 L824.8 26.0ZM842.7 -4.9 L878.4 -4.9 L860.6 26.0ZM431.7 521.2 L449.6 552.1 L413.8 552.1ZM538.9 521.2 L556.8 552.1 L521.0 552.1ZM574.6 521.2 L610.4 521.2 L592.5 552.1ZM449.6 552.1 L485.3 552.1 L467.4 583.1ZM485.3 552.1 L521.0 552.1 L503.2 583.1ZM556.8 552.1 L574.6 583.1 L538.9 583.1ZM431.7 583.1 L449.6 614.0 L413.8 614.0ZM503.2 583.1 L538.9 583.1 L521.0 614.0ZM538.9 583.1 L574.6 583.1 L556.8 614.0ZM342.3 614.0 L360.2 645.0 L324.5 645.0ZM521.0 614.0 L556.8 614.0 L538.9 645.0ZM556.8 614.0 L592.5 614.0 L574.6 645.0ZM431.7 645.0 L467.4 645.0 L449.6 675.9ZM467.4 645.0 L503.2 645.0 L485.3 675.9ZM342.3 675.9 L378.1 675.9 L360.2 706.9ZM485.3 675.9 L503.2 706.9 L467.4 706.9ZM521.0 675.9 L556.8 675.9 L538.9 706.9ZM324.5 706.9 L360.2 706.9 L342.3 737.9ZM395.9 706.9 L431.7 706.9 L413.8 737.9ZM413.8 737.9 L431.7 768.8 L395.9 768.8ZM485.3 737.9 L521.0 737.9 L503.2 768.8ZM288.7 768.8 L306.6 799.8 L270.9 799.8ZM395.9 768.8 L413.8 799.8 L378.1 799.8ZM431.7 768.8 L449.6 799.8 L413.8 799.8Z" fill="#fff" fill-opacity="0.08"/><path d="M735.5 -4.9 L753.3 26.0 L717.6 26.0ZM735.5 -4.9 L771.2 -4.9 L753.3 26.0ZM771.2 -4.9 L789.1 26.0 L753.3 26.0ZM807.0 -4.9 L824.8 26.0 L789.1 26.0ZM807.0 -4.9 L842.7 -4.9 L824.8 26.0ZM431.7 521.2 L467.4 521.2 L449.6 552.1ZM467.4 521.2 L503.2 521.2 L485.3 552.1ZM378.1 552.1 L395.9 583.1 L360.2 583.1ZM521.0 552.1 L556.8 552.1 L538.9 583.1ZM467.4 583.1 L503.2 583.1 L485.3 614.0ZM538.9 583.1 L556.8 614.0 L521.0 614.0ZM574.6 583.1 L610.4 583.1 L592.5 614.0ZM413.8 614.0 L449.6 614.0 L431.7 645.0ZM324.5 645.0 L360.2 645.0 L342.3 675.9ZM360.2 645.0 L378.1 675.9 L342.3 675.9ZM360.2 645.0 L395.9 645.0 L378.1 675.9ZM395.9 645.0 L431.7 645.0 L413.8 675.9ZM431.7 645.0 L449.6 675.9 L413.8 675.9ZM467.4 645.0 L485.3 675.9 L449.6 675.9ZM449.6 675.9 L467.4 706.9 L431.7 706.9ZM288.7 706.9 L306.6 737.9 L270.9 737.9ZM395.9 706.9 L413.8 737.9 L378.1 737.9ZM503.2 706.9 L521.0 737.9 L485.3 737.9ZM503.2 706.9 L538.9 706.9 L521.0 737.9ZM378.1 737.9 L413.8 737.9 L395.9 768.8ZM395.9 768.8 L431.7 768.8 L413.8 799.8Z" fill="#fff" fill-opacity="0.16"/><path d="M699.7 -4.9 L717.6 26.0 L681.9 26.0ZM395.9 521.2 L431.7 521.2 L413.8 552.1ZM503.2 521.2 L521.0 552.1 L485.3 552.1ZM538.9 521.2 L574.6 521.2 L556.8 552.1ZM574.6 521.2 L592.5 552.1 L556.8 552.1ZM610.4 521.2 L628.2 552.1 L592.5 552.1ZM413.8 552.1 L449.6 552.1 L431.7 583.1ZM449.6 552.1 L467.4 583.1 L431.7 583.1ZM395.9 583.1 L431.7 583.1 L413.8 614.0ZM574.6 583.1 L592.5 614.0 L556.8 614.0ZM378.1 614.0 L395.9 645.0 L360.2 645.0ZM413.8 614.0 L431.7 645.0 L395.9 645.0ZM503.2 645.0 L521.0 675.9 L485.3 675.9ZM538.9 645.0 L556.8 675.9 L521.0 675.9ZM538.9 645.0 L574.6 645.0 L556.8 675.9ZM306.6 675.9 L342.3 675.9 L324.5 706.9ZM288.7 706.9 L324.5 706.9 L306.6 737.9ZM270.9 737.9 L288.7 768.8 L253.0 768.8ZM270.9 737.9 L306.6 737.9 L288.7 768.8ZM306.6 737.9 L324.5 768.8 L288.7 768.8ZM342.3 737.9 L360.2 768.8 L324.5 768.8ZM378.1 737.9 L395.9 768.8 L360.2 768.8ZM449.6 737.9 L467.4 768.8 L431.7 768.8ZM485.3 737.9 L503.2 768.8 L467.4 768.8ZM253.0 768.8 L270.9 799.8 L235.1 799.8ZM360.2 768.8 L395.9 768.8 L378.1 799.8ZM431.7 768.8 L467.4 768.8 L449.6 799.8ZM467.4 768.8 L485.3 799.8 L449.6 799.8Z" fill="#b8a890" fill-opacity="0.045"/><path d="M771.2 -4.9 L807.0 -4.9 L789.1 26.0ZM878.4 -4.9 L896.3 26.0 L860.6 26.0ZM914.2 -4.9 L932.0 26.0 L896.3 26.0ZM521.0 552.1 L538.9 583.1 L503.2 583.1ZM556.8 552.1 L592.5 552.1 L574.6 583.1ZM592.5 552.1 L610.4 583.1 L574.6 583.1ZM360.2 583.1 L395.9 583.1 L378.1 614.0ZM503.2 583.1 L521.0 614.0 L485.3 614.0ZM342.3 614.0 L378.1 614.0 L360.2 645.0ZM449.6 614.0 L485.3 614.0 L467.4 645.0ZM324.5 645.0 L342.3 675.9 L306.6 675.9ZM503.2 645.0 L538.9 645.0 L521.0 675.9ZM306.6 675.9 L324.5 706.9 L288.7 706.9ZM342.3 675.9 L360.2 706.9 L324.5 706.9ZM378.1 675.9 L395.9 706.9 L360.2 706.9ZM378.1 675.9 L413.8 675.9 L395.9 706.9ZM485.3 675.9 L521.0 675.9 L503.2 706.9ZM521.0 675.9 L538.9 706.9 L503.2 706.9ZM467.4 706.9 L503.2 706.9 L485.3 737.9ZM342.3 737.9 L378.1 737.9 L360.2 768.8ZM413.8 737.9 L449.6 737.9 L431.7 768.8ZM449.6 737.9 L485.3 737.9 L467.4 768.8ZM288.7 768.8 L324.5 768.8 L306.6 799.8ZM324.5 768.8 L360.2 768.8 L342.3 799.8Z" fill="#b8a890" fill-opacity="0.02"/></g>
<polygon points="661.0,425.5 877.4,799.0 454.1,799.0 592.6,548.0 663.4,425.5" fill="url(#gOr)"/>
<polygon points="661.0,425.5 877.4,799.0 454.1,799.0 592.6,548.0 663.4,425.5" fill="url(#wire)" opacity="0.10"/>
</svg>

<div class="win">
  <div class="hl"></div>
  <div class="term">
    <pre>[debugpoint@archlinux ~]$ neofetch
<b class="c">                   -`                    </b><b class="c">debugpoint</b>@<b class="c">archlinux</b>
<b class="c">                  .o+`                   </b>--------------------
<b class="c">                 `ooo/                   </b><b class="c">OS</b>: Arch Linux x86_64
<b class="c">                `+oooo:                  </b><b class="c">Host</b>: KVM/QEMU (Standard PC (Q35 + ICH9, 2009) pc-q35-7.0)
<b class="c">               `+oooooo:                 </b><b class="c">Kernel</b>: 6.0.7-arch1-1
<b class="c">               -+oooooo+:                </b><b class="c">Uptime</b>: 51 secs
<b class="c">             `/:-:++oooo+:               </b><b class="c">Packages</b>: 1304 (pacman)
<b class="c">            `/++++/+++++++:              </b><b class="c">Shell</b>: bash 5.1.16
<b class="c">           `/++++++++++++++:             </b><b class="c">Resolution</b>: 1280x800
<b class="c">          `/+++ooooooooooooo/`           </b><b class="c">DE</b>: Plasma 5.26.2
<b class="c">         ./ooosssso++osssssso+`          </b><b class="c">WM</b>: KWin
<b class="c">        .oossssso-````/ossssss+`         </b><b class="c">Theme</b>: [Plasma], Breeze [GTK2/3]
<b class="c">       -osssssso.      :ssssssso.        </b><b class="c">Icons</b>: [Plasma], breeze [GTK2/3]
<b class="c">      :osssssss/        osssso+++.       </b><b class="c">Terminal</b>: konsole
<b class="c">     /ossssssss/        +ssssooo/-       </b><b class="c">CPU</b>: AMD Ryzen 7 5800U with Radeon Graphics (4) @ 1.896GHz
<b class="c">   `/ossssso+/:-        -:/+osssso+-     </b><b class="c">GPU</b>: 00:01.0 Red Hat, Inc. Virtio GPU
<b class="c">  `+sso+:-`                 `.-/+oso:    </b><b class="c">Memory</b>: 1477MiB / 3924MiB
<b class="c"> `++:.                           `-/+/   </b>
<b class="c"> .`                                 `/   </b>



[debugpoint@archlinux ~]$ </pre>
    <i style="left:356px;top:324px;background:#ed1515"></i><i style="left:380px;top:324px;background:#11d116"></i><i style="left:404px;top:324px;background:#f67400"></i><i style="left:428px;top:324px;background:#1d99f3"></i><i style="left:452px;top:324px;background:#9b59b6"></i><i style="left:476px;top:324px;background:#1abc9c"></i><i style="left:500px;top:324px;background:#fcfcfc"></i><i style="left:332px;top:341px;background:#7f8c8d"></i><i style="left:356px;top:341px;background:#c0392b"></i><i style="left:380px;top:341px;background:#1cdc9a"></i><i style="left:404px;top:341px;background:#fdbc4b"></i><i style="left:428px;top:341px;background:#3daee9"></i><i style="left:452px;top:341px;background:#8e44ad"></i><i style="left:476px;top:341px;background:#16a085"></i><i style="left:500px;top:341px;background:#ffffff"></i>
    <div class="cursor"></div>
    <div class="sb"></div>
  </div>
</div>

<!-- title bar -->
<svg class="abs" style="left:341px;top:26px" width="16" height="16" viewBox="0 0 16 16">
  <defs><linearGradient id="kg" x1="0" y1="0" x2="0" y2="1"><stop offset="0" stop-color="#3b3e40"/><stop offset="1" stop-color="#2c2f31"/></linearGradient></defs>
  <rect width="16" height="16" fill="url(#kg)"/>
  <path d="M5.5 4.5 L9.5 8.2 L5.8 12" fill="none" stroke="#b9bcbe" stroke-width="0.95"/>
</svg>
<svg class="abs" style="left:1177px;top:29px" width="60" height="12" viewBox="0 0 60 12">
  <path d="M0.7 2.6 L6 7.9 L11.3 2.6" fill="none" stroke="#232629" stroke-width="1.05"/>
  <path d="M24.8 7 L30 1.8 L35.2 7" fill="none" stroke="#232629" stroke-width="1.05"/>
  <path d="M49.8 0.8 L58.4 9.4 M58.4 0.8 L49.8 9.4" fill="none" stroke="#232629" stroke-width="1.05"/>
</svg>

<!-- menu bar -->

<!-- toolbar -->
<svg class="abs" style="left:353px;top:94px" width="16" height="16" viewBox="0 0 16 16">
  <path d="M5.5 0.5 H0.5 V15.5 H10" fill="none" stroke="#232629" stroke-width="1"/>
  <path d="M15.5 3 V10" fill="none" stroke="#232629" stroke-width="1"/>
  <rect x="5" y="0" width="8.5" height="3" fill="#232629"/>
  <path d="M13 3 H16" fill="none" stroke="#232629" stroke-width="1"/>
  <path d="M13.5 11 V16 M11 13.5 H16" fill="none" stroke="#232629" stroke-width="1"/>
</svg>
<svg class="abs" style="left:425px;top:111px" width="7" height="5" viewBox="0 0 7 5"><path d="M0.8 1 L3.5 3.7 L6.2 1" fill="none" stroke="#232629" stroke-width="1"/></svg>
<svg class="abs" style="left:447px;top:94px" width="16" height="16" viewBox="0 0 16 16">
  <rect x="0.5" y="0.5" width="6.2" height="15" fill="none" stroke="#232629"/>
  <rect x="9.3" y="0.5" width="6.2" height="15" fill="none" stroke="#232629"/>
  <rect x="0" y="0" width="7.2" height="3.2" fill="#232629"/>
  <rect x="8.8" y="0" width="7.2" height="3.2" fill="#232629"/>
</svg>
<svg class="abs" style="left:535px;top:98.5px" width="12" height="8" viewBox="0 0 12 8"><path d="M0.9 1.5 L6 6.6 L11.1 1.5" fill="none" stroke="#232629" stroke-width="1.1"/></svg>

<svg class="abs" style="left:1032px;top:94px" width="16" height="16" viewBox="0 0 16 16">
  <path d="M0.5 13.5 V0.5 H5 L7.5 3" fill="none" stroke="#bcbfc1"/>
  <path d="M0.5 13.5 H4" fill="none" stroke="#bcbfc1"/>
  <path d="M4.5 3.5 H9.5 L13.5 7.5 V15.5 H4.5 Z" fill="#d9dbdd" stroke="#bcbfc1"/>
  <path d="M9.5 3.5 V7.5 H13.5 Z" fill="#c4c7c9" stroke="#bcbfc1"/>
</svg>
<svg class="abs" style="left:1106px;top:94px" width="16" height="16" viewBox="0 0 16 16">
  <rect x="1.5" y="2.5" width="13" height="13" fill="none" stroke="#232629"/>
  <rect x="3.3" y="0" width="8.6" height="4.3" fill="#232629"/>
  <path d="M4 6.5 H12 M4 9.5 H10 M4 12.5 H7" fill="none" stroke="#232629"/>
</svg>
<svg class="abs" style="left:1181px;top:94px" width="16" height="16" viewBox="0 0 16 16">
  <circle cx="6.9" cy="5.9" r="5.35" fill="none" stroke="#232629" stroke-width="1.05"/>
  <path d="M10.8 9.8 L16.6 15.6" fill="none" stroke="#232629" stroke-width="1.15"/>
</svg>

<span class="lbl" style="left:735.8px;top:27.2px;transform:scaleX(0.9335)">~ : bash — Konsole</span>
<span class="lbl" style="left:345px;top:57.35px;transform:scaleX(0.919)">File</span>
<span class="lbl" style="left:385.6px;top:57.35px;transform:scaleX(0.944)">Edit</span>
<span class="lbl" style="left:428px;top:57.35px;transform:scaleX(0.939)">View</span>
<span class="lbl" style="left:475px;top:57.35px;transform:scaleX(0.981)">Bookmarks</span>
<span class="lbl" style="left:561px;top:57.35px;transform:scaleX(0.977)">Plugins</span>
<span class="lbl" style="left:624px;top:57.35px;transform:scaleX(0.969)">Settings</span>
<span class="lbl" style="left:691px;top:57.35px;transform:scaleX(0.955)">Help</span>
<span class="lbl" style="left:376px;top:95.2px;transform:scaleX(0.941)">New Tab</span>
<span class="lbl" style="left:470px;top:95.2px;transform:scaleX(0.935)">Split View</span>
<span class="lbl dis" style="left:1055.4px;top:95.2px;transform:scaleX(0.908)">Copy</span>
<span class="lbl" style="left:1129px;top:95.2px;transform:scaleX(0.916)">Paste</span>
<span class="lbl" style="left:1205px;top:95.2px;transform:scaleX(0.946)">Find</span>

<!-- panel -->
<div class="panel"></div>
<div class="task"></div>
<div class="blackline"></div>

<!-- launcher -->
<svg class="abs" style="left:6px;top:762px" width="30" height="28" viewBox="6 762 30 28">
  <circle cx="15" cy="765.6" r="1.5" fill="#232629"/>
  <circle cx="11.5" cy="775.5" r="2.5" fill="#232629"/>
  <circle cx="18" cy="785" r="3.1" fill="#232629"/>
  <path d="M24.6 766.1 L30.1 771.7 L24.9 777.1" fill="none" stroke="#232629" stroke-width="4.3" stroke-linejoin="miter"/>
</svg>
<!-- system settings -->
<svg class="abs" style="left:55px;top:762px" width="28" height="28" viewBox="0 0 28 28">
  <defs><linearGradient id="sg" x1="0" y1="0" x2="1" y2="1"><stop offset="0" stop-color="#33363a"/><stop offset="1" stop-color="#1f2225"/></linearGradient></defs>
  <rect width="28" height="28" fill="url(#sg)"/>
  <path d="M3 10 H25 M3 18 H25" stroke="#5a5e62" stroke-width="1.6"/>
  <path d="M3 10 H20 M3 18 H10" stroke="#3a9bdc" stroke-width="1.8"/>
  <circle cx="20" cy="10" r="2.3" fill="#fcfcfc"/>
  <circle cx="9.8" cy="18" r="2.3" fill="#fcfcfc"/>
</svg>
<!-- discover -->
<svg class="abs" style="left:108px;top:762px" width="26" height="28" viewBox="0 0 26 28">
  <defs><linearGradient id="dg" x1="0" y1="0" x2="0" y2="1"><stop offset="0" stop-color="#3ba4ea"/><stop offset="1" stop-color="#1f86dc"/></linearGradient></defs>
  <path d="M8.5 6 C8.5 0.5 17.5 0.5 17.5 6" fill="none" stroke="#4b6f8c" stroke-width="1"/>
  <path d="M2 5 H24 L25 27 H1 Z" fill="url(#dg)"/>
  <path d="M2 5 H24 L24.1 7 H1.9 Z" fill="#2a6fb0"/>
  <circle cx="8" cy="9" r="0.9" fill="#9fd0f6"/><circle cx="18" cy="9" r="0.9" fill="#9fd0f6"/>
  <path d="M14 13.5 L17.5 16.5 L14 19.5" fill="none" stroke="#e8f4fd" stroke-width="1.4"/>
  <circle cx="11" cy="13.5" r="0.8" fill="#bfe0fa"/><circle cx="9.2" cy="18" r="1" fill="#bfe0fa"/><circle cx="12" cy="22.5" r="1.2" fill="#bfe0fa"/>
</svg>
<!-- dolphin folder -->
<svg class="abs" style="left:158px;top:762px" width="30" height="28" viewBox="0 0 30 28">
  <defs><linearGradient id="fg" x1="0" y1="0" x2="0" y2="1"><stop offset="0" stop-color="#47a3dc"/><stop offset="1" stop-color="#2f8fcf"/></linearGradient></defs>
  <path d="M0 0 H12 L14.5 2.5 H30 V12 H0 Z" fill="#2f6f9f"/>
  <rect x="1" y="5" width="28" height="5" fill="#fcfcfc"/>
  <path d="M0 9.7 H11 L13 8 H30 V27.5 H0 Z" fill="url(#fg)"/>
  <path d="M0 27 H30 V28 H0 Z" fill="#2a78b0"/>
</svg>
<!-- globe -->
<svg class="abs" style="left:211px;top:764px" width="28" height="28" viewBox="0 0 28 28">
  <defs><radialGradient id="gl" cx="0.4" cy="0.35" r="0.7"><stop offset="0" stop-color="#3aa0ee"/><stop offset="1" stop-color="#1b6fd0"/></radialGradient></defs>
  <g fill="#c9cbcc">
    <circle cx="15" cy="14" r="10.5"/>
    <g transform="translate(15 14)">
      <rect x="-2" y="-12.6" width="4" height="25.2"/>
      <rect x="-2" y="-12.6" width="4" height="25.2" transform="rotate(45)"/>
      <rect x="-2" y="-12.6" width="4" height="25.2" transform="rotate(90)"/>
      <rect x="-2" y="-12.6" width="4" height="25.2" transform="rotate(135)"/>
    </g>
  </g>
  <circle cx="14" cy="12" r="9.2" fill="url(#gl)"/>
  <path d="M7 8 C9 4.5 13 3.5 15 4.5 C14 7 11 7.5 10.5 10 C9 10.5 7.5 9.5 7 8 Z" fill="#6fd08a"/>
  <path d="M9.5 13.5 C12 12.5 14.5 14 14.5 16.5 C14 18.5 12.5 20 12 20.5 C10.5 18.5 9.5 16 9.5 13.5 Z" fill="#8fdc90"/>
  <path d="M19 7 C21.5 8.5 22.5 11 22.5 13.5 C21 14 19.5 12.5 19.2 10.5 Z" fill="#6fd08a"/>
</svg>
<!-- konsole task icon -->
<svg class="abs" style="left:263px;top:762px" width="28" height="28" viewBox="0 0 28 28">
  <defs><linearGradient id="kg2" x1="0" y1="0" x2="0" y2="1"><stop offset="0" stop-color="#3d3f41"/><stop offset="1" stop-color="#2d2f31"/></linearGradient></defs>
  <rect width="28" height="28" fill="url(#kg2)"/>
  <rect y="27" width="28" height="1" fill="#1d1f20"/>
  <path d="M10.7 7.6 L17.6 14.2 L10.7 20.8" fill="none" stroke="#b9bbbc" stroke-width="1.5"/>
</svg>

<!-- tray -->
<svg class="abs" style="left:1014px;top:768px" width="16" height="16" viewBox="0 0 16 16">
  <circle cx="8" cy="4" r="3.4" fill="none" stroke="#232629" stroke-width="1.05"/>
  <path d="M0.6 15.8 C1.2 7.6 14.8 7.6 15.4 15.8" fill="none" stroke="#232629" stroke-width="1.05"/>
</svg>
<svg class="abs" style="left:1044px;top:768px" width="16" height="16" viewBox="0 0 16 16">
  <circle cx="8" cy="4" r="3.4" fill="none" stroke="#c2c6c8" stroke-width="1.1"/>
  <path d="M0.6 15.8 C1 9.5 6 8.6 8.5 9.2" fill="none" stroke="#c2c6c8" stroke-width="1.1"/>
  <circle cx="12.5" cy="12.2" r="3" fill="none" stroke="#c2c6c8" stroke-width="1"/>
  <path d="M10.8 12.2 H14.2" stroke="#c2c6c8" stroke-width="1"/>
</svg>
<svg class="abs" style="left:1074px;top:768px" width="16" height="16" viewBox="0 0 16 16">
  <rect x="0" y="5.3" width="2.2" height="5.4" fill="#232629"/>
  <path d="M3.4 5.2 L8.6 0 V16 L3.4 10.8 Z" fill="#232629"/>
  <path d="M10.6 4.6 A4.6 4.6 0 0 1 10.6 11.4" fill="none" stroke="#232629" stroke-width="1.1"/>
  <path d="M12 1.4 A8 8 0 0 1 12 14.6" fill="none" stroke="#8a8e90" stroke-width="0.9"/>
</svg>
<svg class="abs" style="left:1104px;top:768px" width="16" height="16" viewBox="0 0 16 16">
  <rect x="0" y="5.3" width="2.2" height="5.4" fill="#232629"/>
  <path d="M3.4 5.2 L8.6 0 V16 L3.4 10.8 Z" fill="#232629"/>
  <path d="M10.6 4.6 A4.6 4.6 0 0 1 10.6 11.4" fill="none" stroke="#232629" stroke-width="1.1"/>
  <path d="M12 1.4 A8 8 0 0 1 12 14.6" fill="none" stroke="#8a8e90" stroke-width="0.9"/>
</svg>
<svg class="abs" style="left:1133px;top:772px" width="14" height="8" viewBox="0 0 14 8"><path d="M1 7 L7 1 L13 7" fill="none" stroke="#232629" stroke-width="1.2"/></svg>
<span class="clock" style="left:1172.6px;top:760.6px;font-size:15.2px;line-height:19px;transform:scaleX(0.985)">15:24</span>
<span class="clock" style="left:1158.8px;top:777.4px;font-size:12px;line-height:14px;transform:scaleX(1.035)">5 Nov 2022</span>

<svg class="abs" style="left:1245px;top:768px" width="16" height="16" viewBox="0 0 16 16">
  <rect x="0.6" y="0.6" width="14.8" height="14.8" fill="none" stroke="#232629" stroke-width="1.2"/>
  <path d="M1 12.7 H15" stroke="#232629" stroke-width="1.2"/>
</svg>

</body></html>
